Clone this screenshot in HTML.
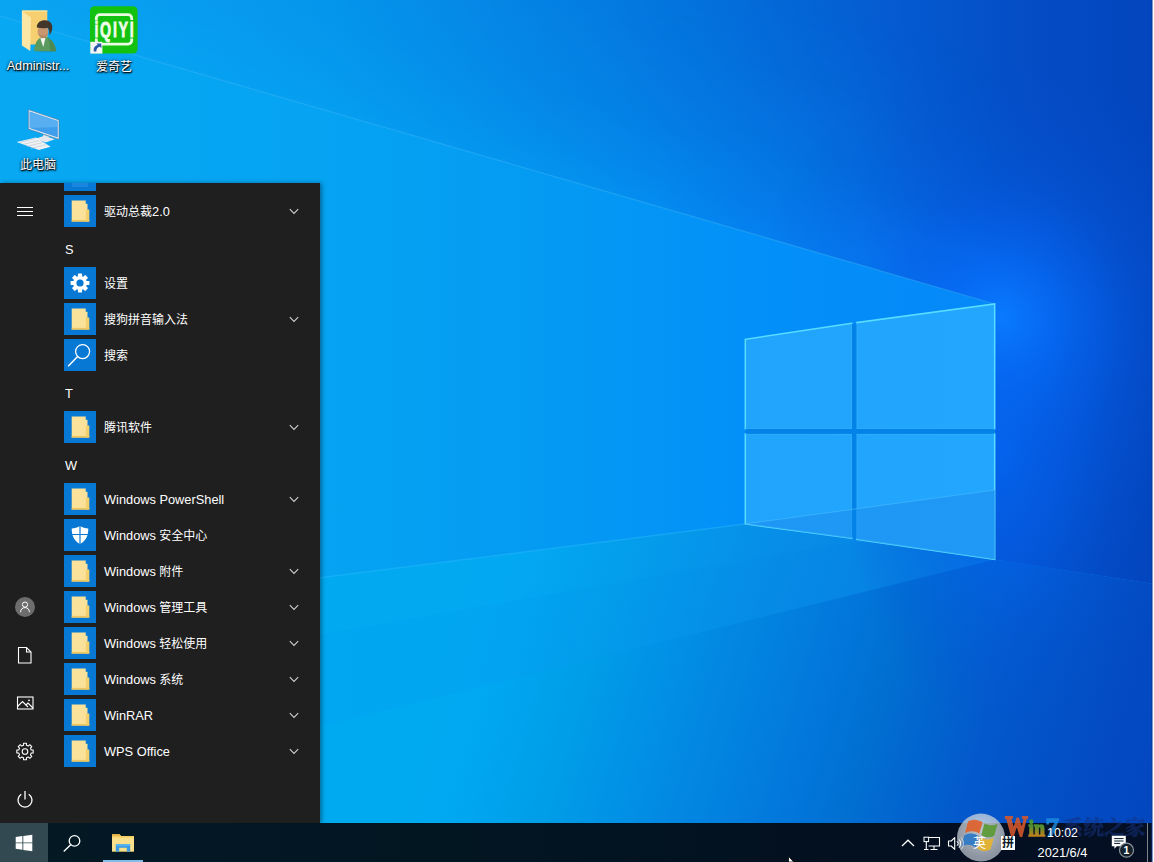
<!DOCTYPE html>
<html lang="zh-CN">
<head>
<meta charset="utf-8">
<title>Windows 10 Desktop</title>
<style>
html,body{margin:0;padding:0;}
body{width:1154px;height:862px;overflow:hidden;position:relative;background:#0a7fe0;font-family:"Liberation Sans","Noto Sans CJK SC",sans-serif;color:#fff;}
#wall{position:absolute;left:0;top:0;width:1154px;height:862px;display:block;}
.abs{position:absolute;}
/* desktop icons */
.dlabel{position:absolute;width:76px;text-align:center;font-size:12px;line-height:15px;color:#fff;text-shadow:0 1px 2px rgba(0,0,0,.9),0 0 3px rgba(0,0,0,.7),1px 1px 1px rgba(0,0,0,.8);white-space:nowrap;}
/* start menu */
#start{position:absolute;left:0;top:183px;width:320px;height:640px;background:#1f1f1f;overflow:hidden;box-shadow:2px 0 4px rgba(0,0,0,.35);}
.row{position:absolute;left:64px;height:36px;width:250px;}
.tile{position:absolute;left:0;top:2px;width:32px;height:32px;background:#0778d4;}
.rlabel{position:absolute;left:40px;top:1px;height:36px;line-height:36px;font-size:12px;color:#fff;white-space:nowrap;}
.hdr{position:absolute;left:65px;font-size:12.800px;color:#fff;height:36px;line-height:36px;}
.chev{position:absolute;left:225px;top:15px;width:10px;height:7px;}
.rail{position:absolute;left:13px;width:24px;height:24px;}
.en{font-size:12.800px;}
.ti{position:absolute;left:0;top:0;}
/* taskbar */
#tbbg{position:absolute;left:0;top:823px;width:1152px;height:39px;background:linear-gradient(90deg,#031924 0%,#021622 40%,#03101f 72%,#040f24 100%);}
#taskbar{position:absolute;left:0;top:823px;width:1154px;height:39px;}
</style>
</head>
<body>
<!--WALL_S--><svg id="wall" width="1154" height="862" viewBox="0 0 1154 862">
<defs>
<linearGradient id="gbase" x1="0" y1="0" x2="1154" y2="0" gradientUnits="userSpaceOnUse">
<stop offset="0" stop-color="#08a8f2"/>
<stop offset="0.28" stop-color="#05a3f2"/>
<stop offset="0.50" stop-color="#0499f3"/>
<stop offset="0.65" stop-color="#0390f9"/>
<stop offset="0.76" stop-color="#048cf9"/>
<stop offset="0.87" stop-color="#0688f8"/>
<stop offset="1" stop-color="#0688f8"/>
</linearGradient>
<linearGradient id="gtop" x1="0" y1="0" x2="1154" y2="0" gradientUnits="userSpaceOnUse">
<stop offset="0" stop-color="#0d9ef0"/>
<stop offset="0.286" stop-color="#0591eb"/>
<stop offset="0.546" stop-color="#0477de"/>
<stop offset="0.65" stop-color="#046bd8"/>
<stop offset="0.78" stop-color="#055ad0"/>
<stop offset="0.90" stop-color="#044cc4"/>
<stop offset="1" stop-color="#0345bd"/>
</linearGradient>
<linearGradient id="gfloorh" x1="0" y1="600" x2="1130.200" y2="939" gradientUnits="userSpaceOnUse">
<stop offset="0" stop-color="#02acf2"/>
<stop offset="0.26" stop-color="#00aaf0"/>
<stop offset="0.373" stop-color="#00aaf0"/>
<stop offset="0.418" stop-color="#00a8f1"/>
<stop offset="0.495" stop-color="#009de8"/>
<stop offset="0.593" stop-color="#0289e3"/>
<stop offset="0.695" stop-color="#0276db"/>
<stop offset="0.739" stop-color="#016fd2"/>
<stop offset="0.836" stop-color="#0358cb"/>
<stop offset="0.94" stop-color="#034ac2"/>
<stop offset="1" stop-color="#0346be"/>
</linearGradient>
<linearGradient id="gwall" x1="995" y1="0" x2="1154" y2="0" gradientUnits="userSpaceOnUse">
<stop offset="0" stop-color="#0764e2"/>
<stop offset="0.55" stop-color="#0554d0"/>
<stop offset="1" stop-color="#044bc5"/>
</linearGradient>
<linearGradient id="gfloorv" x1="0" y1="560" x2="0" y2="862" gradientUnits="userSpaceOnUse">
<stop offset="0" stop-color="#0560d8" stop-opacity="0"/>
<stop offset="1" stop-color="#0558d2" stop-opacity="0.04"/>
</linearGradient>
<radialGradient id="gglow" cx="1002" cy="318" r="260" gradientUnits="userSpaceOnUse">
<stop offset="0" stop-color="#0a7cff" stop-opacity="0.95"/>
<stop offset="0.22" stop-color="#066cf8" stop-opacity="0.72"/>
<stop offset="0.55" stop-color="#055ce6" stop-opacity="0.30"/>
<stop offset="1" stop-color="#044ed0" stop-opacity="0"/>
</radialGradient>
<radialGradient id="gglow2" cx="0.5" cy="0.5" r="0.5">
<stop offset="0" stop-color="#0468f4" stop-opacity="0.9"/>
<stop offset="0.45" stop-color="#0460ea" stop-opacity="0.5"/>
<stop offset="1" stop-color="#044ed0" stop-opacity="0"/>
</radialGradient>
<linearGradient id="gpane" x1="745" y1="0" x2="995" y2="0" gradientUnits="userSpaceOnUse">
<stop offset="0" stop-color="#20a4fc"/>
<stop offset="1" stop-color="#23a7fe"/>
</linearGradient>
<linearGradient id="gstreak" x1="995" y1="0" x2="200" y2="0" gradientUnits="userSpaceOnUse"><stop offset="0" stop-color="#12a6fa" stop-opacity=".42"/><stop offset=".45" stop-color="#10a4f8" stop-opacity=".22"/><stop offset="1" stop-color="#10a4f8" stop-opacity=".04"/></linearGradient>
<radialGradient id="gglow3" cx="0.5" cy="0.5" r="0.5"><stop offset="0" stop-color="#0a7af2" stop-opacity=".5"/><stop offset=".5" stop-color="#0a74ee" stop-opacity=".28"/><stop offset="1" stop-color="#0868e4" stop-opacity="0"/></radialGradient>
<linearGradient id="gnear" x1="500" y1="160.700" x2="566.700" y2="-69.800" gradientUnits="userSpaceOnUse"><stop offset="0" stop-color="#fff" stop-opacity=".74"/><stop offset=".12" stop-color="#fff" stop-opacity=".56"/><stop offset=".35" stop-color="#fff" stop-opacity=".3"/><stop offset=".7" stop-color="#fff" stop-opacity=".1"/><stop offset="1" stop-color="#fff" stop-opacity="0"/></linearGradient>
<linearGradient id="gnearx" x1="860" y1="0" x2="1005" y2="0" gradientUnits="userSpaceOnUse"><stop offset="0" stop-color="#000" stop-opacity="0"/><stop offset="1" stop-color="#000" stop-opacity="1"/></linearGradient>
<mask id="mnear" maskUnits="userSpaceOnUse" x="0" y="0" width="1154" height="862"><rect width="1154" height="862" fill="url(#gnear)"/><rect width="1154" height="862" fill="url(#gnearx)"/></mask>
<clipPath id="cpglow"><path clip-rule="evenodd" d="M0 0H1154V862H0Z M0 16L995 304V559.500L745 524L0 618Z"/></clipPath>
<filter id="blur6" x="-10%" y="-10%" width="120%" height="120%"><feGaussianBlur stdDeviation="5"/></filter>
</defs>
<rect width="1154" height="862" fill="url(#gbase)"/>
<!-- sky above the beam -->
<polygon points="0,0 1154,0 1154,584 995,559.500 995,304 0,16" fill="url(#gtop)"/>
<!-- right wall -->

<polygon points="0,0 1154,0 1154,350 995,304 0,16" fill="url(#gbase)" mask="url(#mnear)"/>
<!-- floor -->
<polygon points="0,618 745,524 995,559.5 1154,584 1154,862 0,862" fill="url(#gfloorh)"/>
<polygon points="0,618 745,524 995,559.5 0,806" fill="url(#gstreak)"/>
<polygon points="0,690 853,542 995,559.5 0,806" fill="#0560d6" opacity="0.03"/>
<!-- glow -->
<g clip-path="url(#cpglow)"><ellipse cx="880" cy="262" rx="230" ry="70" transform="rotate(16.100 880 262)" fill="url(#gglow3)"/><ellipse cx="1000" cy="450" rx="160" ry="280" fill="url(#gglow2)"/>
<rect x="600" y="0" width="554" height="800" fill="url(#gglow)"/></g>
<!-- beam line -->
<line x1="0" y1="16" x2="995" y2="304" stroke="#3cb8f8" stroke-width="1.2" opacity="0.45"/>
<line x1="0" y1="618" x2="745" y2="524" stroke="#2cbcfc" stroke-width="1.5" opacity="0.4"/>
<!-- logo -->
<polygon points="745,339.3 995,303.8 995,559.5 745,523.9" fill="#0382e8"/>
<g>
<polygon points="745,339.3 851.8,323.2 851.8,428.8 745,428.8" fill="url(#gpane)"/>
<polygon points="856.7,322.6 995,303.8 995,428.8 856.7,428.8" fill="url(#gpane)"/>
<polygon points="745,434 851.8,434 851.8,538.4 745,523.9" fill="url(#gpane)"/>
<polygon points="856.7,434 995,434 995,559.5 856.7,539.4" fill="url(#gpane)"/>
</g>
<g fill="none" stroke="#58dcff" stroke-width="1.5" stroke-linecap="square">
<path d="M745.300 428.800V339.300L851.800 323.300M856.700 322.600L994.700 303.900V428.800M745.300 434V523.900L851.800 538.300M856.700 539.300L994.700 559.400V434"/>
</g>
<g fill="none" stroke="#3cb4ff" stroke-width="1" opacity=".55">
<path d="M745 428.500H851.800M856.700 428.500H995M745 434.300H851.800M856.700 434.300H995M851.500 323.200V428.800M857 322.600V428.800M851.500 434V538.400M857 434V539.400"/>
</g>
<!-- floor reflection inside lower panes -->
<polygon points="745,523.9 851.8,509.8 851.8,538.4" fill="#1c8ef0" opacity="0.6"/>
<polygon points="856.7,509 995,490 995,559.5 856.7,539.4" fill="#1c8ef0" opacity="0.6"/>
<line x1="745" y1="523.9" x2="995" y2="490" stroke="#48bcff" stroke-width="1" opacity="0.6"/>

</svg>
<!--WALL_E-->
<!--DESKTOP_S--><div id="desktop">
<!-- Administrator folder -->
<svg class="abs" style="left:16px;top:4px" width="48" height="52" viewBox="16 4 48 52">
<path d="M22 10.500h25.300v34H22z" fill="#f6d070"/>
<path d="M22 10.500h25.300v1.200H22z" fill="#fbe6a0"/>
<path d="M21.900 11l9.100 6.400-.7 33.700-8.400-5.500z" fill="#fbe6a6"/>
<ellipse cx="46" cy="50.500" rx="10.500" ry="1.800" fill="#1c5f9c" opacity=".3"/>
<path d="M34 51.300c.2-5.600 2.400-11.300 6.200-13.600 1.800-1.100 5.800-1.200 7.800 0 4.800 2.800 7.800 7.800 8 13.600z" fill="#5a9a5e"/>
<path d="M48 37.700c4.800 2.800 7.800 7.800 8 13.600h-6c.4-5-.6-9.800-2-13.600z" fill="#4c8a52"/>
<path d="M40.300 38.200l3 8.800 2.200-9z" fill="#f4f4f0"/>
<ellipse cx="42.900" cy="31.600" rx="5.400" ry="6.300" fill="#c8976f"/>
<path d="M38.400 33.500c.8 2.800 2.600 4.400 4.600 4.400 2.200 0 4-1.500 4.900-4.200-1.500 1.300-3 1.900-4.800 1.900-1.900 0-3.400-.7-4.700-2.100z" fill="#b48560"/>
<path d="M36.800 27.600c-.2-4.900 3.600-7.400 8.200-7.400 4.800 0 7.600 3.300 7.300 7.800-.2 3-1.200 5.300-2.900 6.900.3-3-.2-5.400-1.700-7.200-2.900.9-6.800.8-10.900-.1z" fill="#43352a"/>
</svg>
<div class="dlabel" style="left:0;top:59px"><span style="font-size:12.700px">Administr...</span></div>
<!-- iQIYI -->
<svg class="abs" style="left:88px;top:4px" width="52" height="52" viewBox="88 4 52 52">
<rect x="90" y="6.300" width="47.600" height="47.300" rx="4.500" fill="#13c211"/>
<path d="M96.300 20v-1.800a3.600 3.600 0 0 1 3.600-3.600h28.200a3.600 3.600 0 0 1 3.600 3.600V20M131.700 38.500v2a3.600 3.600 0 0 1-3.600 3.600H99.900a3.600 3.600 0 0 1-3.600-3.600v-2" fill="none" stroke="#e9fbe2" stroke-width="2.800"/>
<text transform="translate(94.400 37.200) scale(.66 1)" font-family="'Liberation Sans',sans-serif" font-weight="bold" font-size="21.600" letter-spacing="2.600" fill="#effce9" stroke="#effce9" stroke-width=".8">iQIYI</text>
<rect x="90.300" y="41.800" width="12.100" height="11.800" fill="#f4f6f8"/>
<path d="M93.800 51.600c-.6-3.600 1-6 4-6.600l-1.300-1.600 4.800.2.100 4.700-1.500-1.500c-2.300.5-3.600 2-3.600 4.800z" fill="#2a58a8"/>
</svg>
<div class="dlabel" style="left:76px;top:60px">爱奇艺</div>
<!-- This PC -->
<svg class="abs" style="left:14px;top:104px" width="50" height="50" viewBox="14 104 50 50">
<path d="M28.400 109.600l30.600 10.400v19.400l-30.600-10.400z" fill="#e9eef3" stroke="#46688c" stroke-width=".7" stroke-opacity=".75"/>
<path d="M29.600 111.400l28.200 9.600v16.600l-28.200-9.600z" fill="#3f9eec"/>
<path d="M29.600 111.400l28.200 9.600v6l-28.200 1.000z" fill="#62b6f4" opacity=".7"/>
<path d="M43 134.500l6 2v3l-6-2z" fill="#c9d2da"/>
<path d="M35.400 138.800l9-3 10.400 3.400-9 3.200z" fill="#e4e8ec"/>
<path d="M16.600 142l19.400-4.600 14.600 9.400-11.800 3.200z" fill="#eef1f4"/>
<path d="M20 142.300l15.600-3.700M23.500 144.300l15.600-3.700M27 146.300l15.600-3.700M31 148.300l15-3.600" stroke="#c4ccd4" stroke-width=".7"/>
</svg>
<div class="dlabel" style="left:0;top:158px">此电脑</div>
</div>
<!--DESKTOP_E-->
<!--START_S--><div id="start">
<div class="row" style="top:-26px"><div class="tile"><svg class="ti" viewBox="0 0 32 32" width="32" height="32"><rect x="8" y="22" width="16" height="6" fill="#1a86e0"/></svg></div></div>
<div class="row" style="top:10px"><div class="tile"><svg class="ti" viewBox="0 0 32 32" width="32" height="32"><path d="M7.7 5.6h14v3.2h1.8v17.8H7.7z" fill="#fbe29a"/><path d="M21.7 14.5h3.6v12.1h-3.6z" fill="#f3cf6e"/><path d="M7.7 24.9h17.6v1.7H7.7z" fill="#f0c75e"/></svg></div><div class="rlabel">驱动总裁<span class="en">2.0</span></div><svg class="chev" viewBox="0 0 10 7" width="10" height="7"><path d="M0.800 1.200L5 5.400 9.200 1.200" fill="none" stroke="#d0d0d0" stroke-width="1.100"/></svg></div>
<div class="hdr" style="top:49px">S</div>
<div class="row" style="top:82px"><div class="tile"><svg class="ti" viewBox="0 0 32 32" width="32" height="32"><g transform="translate(16 16)"><g fill="#fff"><rect x="-2.1" y="-9.4" width="4.2" height="18.8" rx="0.6"/><rect x="-2.1" y="-9.4" width="4.2" height="18.8" rx="0.6" transform="rotate(45)"/><rect x="-2.1" y="-9.4" width="4.2" height="18.8" rx="0.6" transform="rotate(90)"/><rect x="-2.1" y="-9.4" width="4.2" height="18.8" rx="0.6" transform="rotate(135)"/><circle r="6.9"/></g><circle r="3.6" fill="#0778d4"/></g></svg></div><div class="rlabel">设置</div></div>
<div class="row" style="top:118px"><div class="tile"><svg class="ti" viewBox="0 0 32 32" width="32" height="32"><path d="M7.7 5.6h14v3.2h1.8v17.8H7.7z" fill="#fbe29a"/><path d="M21.7 14.5h3.6v12.1h-3.6z" fill="#f3cf6e"/><path d="M7.7 24.9h17.6v1.7H7.7z" fill="#f0c75e"/></svg></div><div class="rlabel">搜狗拼音输入法</div><svg class="chev" viewBox="0 0 10 7" width="10" height="7"><path d="M0.800 1.200L5 5.400 9.200 1.200" fill="none" stroke="#d0d0d0" stroke-width="1.100"/></svg></div>
<div class="row" style="top:154px"><div class="tile"><svg class="ti" viewBox="0 0 32 32" width="32" height="32"><circle cx="18.6" cy="12.6" r="7" fill="none" stroke="#fff" stroke-width="1.3"/><path d="M13.6 17.6L4.6 26.8" stroke="#fff" stroke-width="1.5" stroke-linecap="round"/></svg></div><div class="rlabel">搜索</div></div>
<div class="hdr" style="top:193px">T</div>
<div class="row" style="top:226px"><div class="tile"><svg class="ti" viewBox="0 0 32 32" width="32" height="32"><path d="M7.7 5.6h14v3.2h1.8v17.8H7.7z" fill="#fbe29a"/><path d="M21.7 14.5h3.6v12.1h-3.6z" fill="#f3cf6e"/><path d="M7.7 24.9h17.6v1.7H7.7z" fill="#f0c75e"/></svg></div><div class="rlabel">腾讯软件</div><svg class="chev" viewBox="0 0 10 7" width="10" height="7"><path d="M0.800 1.200L5 5.400 9.200 1.200" fill="none" stroke="#d0d0d0" stroke-width="1.100"/></svg></div>
<div class="hdr" style="top:265px">W</div>
<div class="row" style="top:298px"><div class="tile"><svg class="ti" viewBox="0 0 32 32" width="32" height="32"><path d="M7.7 5.6h14v3.2h1.8v17.8H7.7z" fill="#fbe29a"/><path d="M21.7 14.5h3.6v12.1h-3.6z" fill="#f3cf6e"/><path d="M7.7 24.9h17.6v1.7H7.7z" fill="#f0c75e"/></svg></div><div class="rlabel"><span class="en">Windows PowerShell</span></div><svg class="chev" viewBox="0 0 10 7" width="10" height="7"><path d="M0.800 1.200L5 5.400 9.200 1.200" fill="none" stroke="#d0d0d0" stroke-width="1.100"/></svg></div>
<div class="row" style="top:334px"><div class="tile"><svg class="ti" viewBox="0 0 32 32" width="32" height="32"><path d="M16 7c2.6 1.7 5.2 2.4 8.3 2.5 0 7-2.3 12.300-8.3 15.6C10 21.800 7.700 16.500 7.700 9.500 10.800 9.400 13.400 8.700 16 7z" fill="#fff"/><path d="M16 7v18.100M7.900 15.500h16.200" stroke="#0778d4" stroke-width="1.2"/></svg></div><div class="rlabel"><span class="en">Windows</span> 安全中心</div></div>
<div class="row" style="top:370px"><div class="tile"><svg class="ti" viewBox="0 0 32 32" width="32" height="32"><path d="M7.7 5.6h14v3.2h1.8v17.8H7.7z" fill="#fbe29a"/><path d="M21.7 14.5h3.6v12.1h-3.6z" fill="#f3cf6e"/><path d="M7.7 24.9h17.6v1.7H7.7z" fill="#f0c75e"/></svg></div><div class="rlabel"><span class="en">Windows</span> 附件</div><svg class="chev" viewBox="0 0 10 7" width="10" height="7"><path d="M0.800 1.200L5 5.400 9.200 1.200" fill="none" stroke="#d0d0d0" stroke-width="1.100"/></svg></div>
<div class="row" style="top:406px"><div class="tile"><svg class="ti" viewBox="0 0 32 32" width="32" height="32"><path d="M7.7 5.6h14v3.2h1.8v17.8H7.7z" fill="#fbe29a"/><path d="M21.7 14.5h3.6v12.1h-3.6z" fill="#f3cf6e"/><path d="M7.7 24.9h17.6v1.7H7.7z" fill="#f0c75e"/></svg></div><div class="rlabel"><span class="en">Windows</span> 管理工具</div><svg class="chev" viewBox="0 0 10 7" width="10" height="7"><path d="M0.800 1.200L5 5.400 9.200 1.200" fill="none" stroke="#d0d0d0" stroke-width="1.100"/></svg></div>
<div class="row" style="top:442px"><div class="tile"><svg class="ti" viewBox="0 0 32 32" width="32" height="32"><path d="M7.7 5.6h14v3.2h1.8v17.8H7.7z" fill="#fbe29a"/><path d="M21.7 14.5h3.6v12.1h-3.6z" fill="#f3cf6e"/><path d="M7.7 24.9h17.6v1.7H7.7z" fill="#f0c75e"/></svg></div><div class="rlabel"><span class="en">Windows</span> 轻松使用</div><svg class="chev" viewBox="0 0 10 7" width="10" height="7"><path d="M0.800 1.200L5 5.400 9.200 1.200" fill="none" stroke="#d0d0d0" stroke-width="1.100"/></svg></div>
<div class="row" style="top:478px"><div class="tile"><svg class="ti" viewBox="0 0 32 32" width="32" height="32"><path d="M7.7 5.6h14v3.2h1.8v17.8H7.7z" fill="#fbe29a"/><path d="M21.7 14.5h3.6v12.1h-3.6z" fill="#f3cf6e"/><path d="M7.7 24.9h17.6v1.7H7.7z" fill="#f0c75e"/></svg></div><div class="rlabel"><span class="en">Windows</span> 系统</div><svg class="chev" viewBox="0 0 10 7" width="10" height="7"><path d="M0.800 1.200L5 5.400 9.200 1.200" fill="none" stroke="#d0d0d0" stroke-width="1.100"/></svg></div>
<div class="row" style="top:514px"><div class="tile"><svg class="ti" viewBox="0 0 32 32" width="32" height="32"><path d="M7.7 5.6h14v3.2h1.8v17.8H7.7z" fill="#fbe29a"/><path d="M21.7 14.5h3.6v12.1h-3.6z" fill="#f3cf6e"/><path d="M7.7 24.9h17.6v1.7H7.7z" fill="#f0c75e"/></svg></div><div class="rlabel"><span class="en">WinRAR</span></div><svg class="chev" viewBox="0 0 10 7" width="10" height="7"><path d="M0.800 1.200L5 5.400 9.200 1.200" fill="none" stroke="#d0d0d0" stroke-width="1.100"/></svg></div>
<div class="row" style="top:550px"><div class="tile"><svg class="ti" viewBox="0 0 32 32" width="32" height="32"><path d="M7.7 5.6h14v3.2h1.8v17.8H7.7z" fill="#fbe29a"/><path d="M21.7 14.5h3.6v12.1h-3.6z" fill="#f3cf6e"/><path d="M7.7 24.9h17.6v1.7H7.7z" fill="#f0c75e"/></svg></div><div class="rlabel"><span class="en">WPS Office</span></div><svg class="chev" viewBox="0 0 10 7" width="10" height="7"><path d="M0.800 1.200L5 5.400 9.200 1.200" fill="none" stroke="#d0d0d0" stroke-width="1.100"/></svg></div>
<svg class="rail" style="top:16px" viewBox="0 0 24 24"><path d="M4 8.500h16M4 12.500h16M4 16.500h16" stroke="#fff" stroke-width="1"/></svg>
<svg class="rail" style="top:412px" viewBox="0 0 24 24"><circle cx="12" cy="12" r="10" fill="#6d6d6d"/><circle cx="12" cy="9.600" r="2.600" fill="none" stroke="#fff" stroke-width="1"/><path d="M7.600 17.200c0-3 2-4.600 4.400-4.600s4.400 1.600 4.400 4.600" fill="none" stroke="#fff" stroke-width="1"/></svg>
<svg class="rail" style="top:460px" viewBox="0 0 24 24"><path d="M5.500 4.500h8l4.500 4.500v11h-12.500z" fill="none" stroke="#fff" stroke-width="1.100"/><path d="M13.500 4.500v4.500h4.500" fill="none" stroke="#fff" stroke-width="1.100"/></svg>
<svg class="rail" style="top:508px" viewBox="0 0 24 24"><rect x="4.500" y="6" width="15.500" height="12" fill="none" stroke="#fff" stroke-width="1.100"/><path d="M4.500 15.500l5-5 5.500 5.500M12.500 14.500l2.500-2.500 5 5" fill="none" stroke="#fff" stroke-width="1.100"/><circle cx="16" cy="9.300" r="0.900" fill="#fff"/></svg>
<svg class="rail" style="top:556px" viewBox="0 0 24 24"><path d="M10.57 4.32 L13.43 4.32 L13.49 6.28 L15.34 7.04 L16.77 5.71 L18.79 7.73 L17.46 9.16 L18.22 11.01 L20.18 11.07 L20.18 13.93 L18.22 13.99 L17.46 15.84 L18.79 17.27 L16.77 19.29 L15.34 17.96 L13.49 18.72 L13.43 20.68 L10.57 20.68 L10.51 18.72 L8.66 17.96 L7.23 19.29 L5.21 17.27 L6.54 15.84 L5.78 13.99 L3.82 13.93 L3.82 11.07 L5.78 11.01 L6.54 9.16 L5.21 7.73 L7.23 5.71 L8.66 7.04 L10.51 6.28Z" fill="none" stroke="#fff" stroke-width="1.100" stroke-linejoin="round"/><circle cx="12" cy="12.500" r="2.800" fill="none" stroke="#fff" stroke-width="1.100"/></svg>
<svg class="rail" style="top:604px" viewBox="0 0 24 24"><path d="M8.300 7.200a7 7 0 1 0 7.400 0" fill="none" stroke="#fff" stroke-width="1.300"/><path d="M12 4v8.500" stroke="#fff" stroke-width="1.300"/></svg>
</div><!--START_E-->
<div id="tbbg"></div>
<!--WATERMARK_S--><svg id="wm" class="abs" style="left:950px;top:806px" width="204" height="56" viewBox="950 806 204 56">
<defs>
<linearGradient id="wmin" x1="0" y1="818" x2="0" y2="836" gradientUnits="userSpaceOnUse"><stop offset="0" stop-color="#3a9a3c"/><stop offset="0.500" stop-color="#5e9a30"/><stop offset="1" stop-color="#d08a1c"/></linearGradient>
<radialGradient id="wmorb" cx="981" cy="832" r="26" gradientUnits="userSpaceOnUse"><stop offset="0" stop-color="#e8ecf0" stop-opacity=".82"/><stop offset="1" stop-color="#c0c8d2" stop-opacity=".72"/></radialGradient>
</defs>
<circle cx="981" cy="837.600" r="24" fill="url(#wmorb)"/>
<g opacity=".9">
<path d="M968 821.500c4.500-2.600 9.500-2.600 14.600 0.800l-3.300 11.400c-4.600-3-9.300-3.200-14.300-.8z" fill="#e0602a"/>
<path d="M984.600 823.200c4.400 2.600 8.800 2.800 13 .6l-3.300 12c-4.300 2.300-8.600 2-13-.8z" fill="#5a9a34"/>
<path d="M964.400 835.200c4.800-2.600 9.600-2.400 14.300.7l-3 11.300c-4.600-3-9.300-3.300-14.400-.8z" fill="#2a78c8"/>
<path d="M980.800 837.200c4.300 2.700 8.600 3 12.900.8l-3.200 11.600c-4.200 2.200-8.500 2-12.800-.8z" fill="#e8b42c"/>
</g>
<text x="1005.300" y="836" font-family="'Liberation Serif',serif" font-weight="bold" font-size="30" fill="#d4582c" stroke="#d4582c" stroke-width="2" opacity=".88" textLength="22.500" lengthAdjust="spacingAndGlyphs">W</text>
<text x="1028.600" y="836" font-family="'Liberation Serif',serif" font-weight="bold" font-size="24" fill="url(#wmin)" stroke="url(#wmin)" stroke-width="1.600" opacity=".92" textLength="16.500" lengthAdjust="spacingAndGlyphs">in</text>
<text x="1045.500" y="836" font-family="'Liberation Serif',serif" font-weight="bold" font-size="26" fill="#1f8ede" stroke="#1f8ede" stroke-width="1.400" opacity=".8" textLength="13.500" lengthAdjust="spacingAndGlyphs">7</text>
<text x="1062.500" y="834.500" font-family="'Noto Serif CJK SC','Noto Sans CJK SC',serif" font-weight="bold" font-size="20.800" fill="#16327e" stroke="#16327e" stroke-width=".7" opacity=".55" textLength="83" lengthAdjust="spacingAndGlyphs">系统之家</text>
</svg>
<!--WATERMARK_E-->
<!--TASKBAR_S--><div id="taskbar">
<div class="abs" style="left:0;top:0;width:48px;height:39px;background:#334951"></div>
<svg class="abs" style="left:15px;top:11px" width="18" height="18" viewBox="0 0 18 18"><path d="M0.700 3.100L7.400 2.100V8.400H0.700zM8.300 2L17.300 0.700V8.400H8.300zM0.700 9.300H7.400V15.700L0.700 14.700zM8.300 9.300H17.300V17.200L8.300 15.900z" fill="#fff"/></svg>
<svg class="abs" style="left:60px;top:8px" width="24" height="24" viewBox="0 0 24 24"><circle cx="14.500" cy="9.900" r="5.300" fill="none" stroke="#fff" stroke-width="1.300"/><path d="M10.700 13.700L4.200 20" stroke="#fff" stroke-width="1.400" stroke-linecap="round"/></svg>
<svg class="abs" style="left:111px;top:9px" width="24" height="21" viewBox="0 0 24 21">
<path d="M1 2.200h7.500l1.600 1.800H23v15.400H1z" fill="#f5cf63"/>
<path d="M1 5.600h22v13.800H1z" fill="#fbe08c"/>
<path d="M1 2.200h7.500l1.600 1.800H1z" fill="#e9b64a"/>
<path d="M4.800 12.200h14.400v7.200h-3.400v-3.600H8.200v3.600H4.800z" fill="#3b9be3"/>
<path d="M4.800 12.200h14.400v1.800H4.800z" fill="#55b4f2"/>
</svg>
<div class="abs" style="left:103px;top:37px;width:40px;height:2px;background:#80bdea"></div>
<svg class="abs" style="left:901px;top:16px" width="14" height="8" viewBox="0 0 14 8"><path d="M1 7L7 1.200 13 7" fill="none" stroke="#fff" stroke-width="1.200"/></svg>
<svg class="abs" style="left:923px;top:13px" width="18" height="15" viewBox="0 0 18 15">
<path d="M5.500 1.500h11v8.500H5.500" fill="none" stroke="#fff" stroke-width="1.100"/>
<path d="M11 10v3.200M7.500 13.500h7" stroke="#fff" stroke-width="1.100" fill="none"/>
<rect x="1" y="1.200" width="4.600" height="4.400" fill="none" stroke="#fff" stroke-width="1"/>
<path d="M3.300 5.600v8M1 13.500h4.500" stroke="#fff" stroke-width="1.100" fill="none"/>
</svg>
<svg class="abs" style="left:947px;top:13px" width="18" height="15" viewBox="0 0 18 15">
<path d="M1.500 5h2.700L7.700 1.600v11.800L4.200 10H1.500z" fill="none" stroke="#fff" stroke-width="1.100" stroke-linejoin="round"/>
<path d="M10 5.200a3.200 3.200 0 0 1 0 4.600" fill="none" stroke="#fff" stroke-width="1"/>
<path d="M12 3.300a6 6 0 0 1 0 8.400" fill="none" stroke="#fff" stroke-width="1"/>
<path d="M14 1.400a8.800 8.800 0 0 1 0 12.200" fill="none" stroke="#cfd6dc" stroke-width="1"/>
</svg>
<div class="abs" style="left:969px;top:11px;width:21px;text-align:center;font-size:13px;line-height:18px;color:#fff">英</div>
<div class="abs" style="left:1001px;top:13px;width:14px;height:14px;background:#fff;color:#0b1a26;font-size:12px;line-height:14px;text-align:center;font-weight:bold;overflow:hidden">拼</div>
<div class="abs" style="left:1032px;top:3px;width:61px;text-align:center;font-size:12.300px;line-height:15px;color:#fff">10:02</div>
<div class="abs" style="left:1027px;top:22px;width:71px;text-align:center;font-size:12.800px;line-height:15px;color:#fff">2021/6/4</div>
<svg class="abs" style="left:1110px;top:11px" width="26" height="26" viewBox="0 0 26 26">
<path d="M1.800 1.800h14v10.400H6.800l-2.400 2.600v-2.600H1.800z" fill="#fff"/>
<path d="M4.200 4.600h9.400M4.200 7h9.400M4.200 9.400h6" stroke="#05192a" stroke-width="1"/>
<circle cx="16.500" cy="16.200" r="7" fill="#14202b" stroke="#8d949a" stroke-width="1.200"/>
</svg>
<div class="abs" style="left:1120px;top:20px;width:13px;text-align:center;font-size:10.500px;line-height:14px;font-weight:bold;color:#fff">1</div>
<div class="abs" style="left:1147px;top:0;width:1px;height:39px;background:#7c858c"></div>
<svg class="abs cursor" style="left:786px;top:33px" width="10" height="6" viewBox="0 0 10 6"><path d="M2.500 0.300L2.500 6H7.800Z" fill="#fff" stroke="#000" stroke-width="0.800"/></svg>
</div><!--TASKBAR_E-->

<div id="edge" class="abs" style="left:1151px;top:0;width:3px;height:862px;background:linear-gradient(90deg,rgba(10,50,140,.45) 0,rgba(10,50,140,.45) 33.300%,#8298c8 33.300%,#8298c8 66.600%,#fdfeff 66.600%)"></div>
</body>
</html>
